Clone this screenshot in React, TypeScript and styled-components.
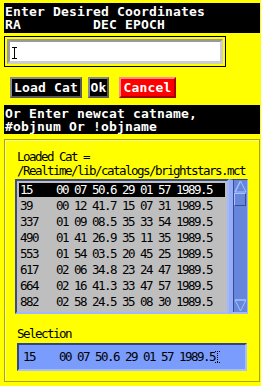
import React from "react";
import styled, { createGlobalStyle, css } from "styled-components";

const Global = createGlobalStyle`
  html, body { margin: 0; padding: 0; background: #ffff00; }
  #root { width: 261px; height: 386px; }
`;

const bigFont = css`
  font-family: "DejaVu Sans Mono", "Liberation Mono", monospace;
  font-weight: bold;
  font-size: 13px;
  letter-spacing: 0.17px;
  line-height: 13px;
  white-space: pre;
`;

const smallFont = css`
  font-family: "DejaVu Sans Mono", "Liberation Mono", monospace;
  font-size: 12.5px;
  letter-spacing: -1.525px;
  line-height: 14px;
  white-space: pre;
`;

const Window = styled.div`
  width: 261px;
  height: 386px;
  box-sizing: border-box;
  background: #ffff00;
  display: flex;
  flex-direction: column;
  align-items: flex-start;
  padding: 3px 0 0 4px;
  overflow: hidden;
`;

const Banner = styled.div<{ $mt: number; $pb: number }>`
  ${bigFont}
  margin-top: ${(p) => p.$mt}px;
  width: 256px;
  box-sizing: border-box;
  background: #000;
  color: #fff;
  padding: 2px 1px ${(p) => p.$pb}px;
`;

const InputFrame = styled.div`
  margin-top: 3px;
  width: 222px;
  height: 31px;
  box-sizing: border-box;
  border: 1px solid #000;
  padding: 2px;
`;

const TextField = styled.div`
  height: 25px;
  box-sizing: border-box;
  background: #fff;
  border-style: solid;
  border-width: 3px;
  border-color: #9a9a9a #cdcdcd #cdcdcd #9a9a9a;
  display: flex;
  align-items: center;
  padding: 2px 0 0 2px;
`;

const ButtonRow = styled.div`
  margin: 10px 0 0 6px;
  display: flex;
  align-items: flex-start;
`;

const Button = styled.div<{ $w: number; $ml: number; $danger?: boolean }>`
  ${bigFont}
  width: ${(p) => p.$w}px;
  height: 21px;
  margin-left: ${(p) => p.$ml}px;
  box-sizing: border-box;
  border: 2px solid;
  border-color: ${(p) =>
    p.$danger ? "#ff8c8c #a40000 #a40000 #ff8c8c" : "#8a8a8a #5a5a5a #5a5a5a #8a8a8a"};
  background: ${(p) => (p.$danger ? "#ff0000" : "#000")};
  color: #fff;
  display: flex;
  align-items: center;
  justify-content: center;
`;

const Frame = styled.div`
  margin-top: 5px;
  width: 256px;
  height: 243px;
  box-sizing: border-box;
  border: 1px solid #a8a800;
  box-shadow: inset 1px 1px 0 #ffff9a;
  padding: 10px 0 0 10px;
  display: flex;
  flex-direction: column;
  align-items: flex-start;
`;

const Label = styled.div<{ $mt?: number }>`
  ${smallFont}
  color: #000;
  margin-top: ${(p) => p.$mt ?? 0}px;
  padding-left: 2px;
`;

const ListBox = styled.div`
  margin-top: 1px;
  display: flex;
  height: 135px;
`;

const List = styled.div`
  width: 214px;
  height: 135px;
  box-sizing: border-box;
  border: 2px solid;
  border-color: #3b4a8e #9fb8ff #9fb8ff #3b4a8e;
  background: #bebebe;
  padding: 1px 2px;
  overflow: hidden;
`;

const Row = styled.div`
  height: 16px;
  padding: 1px 0;
  box-sizing: border-box;
`;

const Item = styled.div<{ $selected?: boolean }>`
  ${smallFont}
  height: 14px;
  padding-left: 1px;
  background: ${(p) => (p.$selected ? "#000" : "transparent")};
  color: ${(p) => (p.$selected ? "#fff" : "#000")};
`;

const ScrollBar = styled.div`
  width: 19px;
  height: 135px;
  box-sizing: border-box;
  border-style: solid;
  border-width: 1px 1px 2px 4px;
  border-color: #3b4a8e #9fb8ff #9fb8ff #94aefc;
  background: #6686dc;
  display: flex;
  flex-direction: column;
  align-items: center;
  justify-content: space-between;
  box-shadow: inset 1px 0 0 #3b4a8e;
`;

const ScrollTop = styled.div`
  display: flex;
  flex-direction: column;
  align-items: center;
`;

const Thumb = styled.div`
  width: 12px;
  height: 13px;
  box-sizing: border-box;
  border: 1px solid;
  border-color: #a8c0ff #3b4a8e #3b4a8e #a8c0ff;
  background: #6686dc;
`;

const SelField = styled.div`
  margin: 2px 0 0 2px;
  width: 230px;
  height: 28px;
  box-sizing: border-box;
  border: 2px solid;
  border-color: #34448c #a8c0ff #a8c0ff #34448c;
  background: #7a9cfc;
  padding-left: 4px;
  display: flex;
  align-items: center;
`;

const SelText = styled.span`
  ${smallFont}
  color: #000;
`;

const rows = [
  "15    00 07 50.6 29 01 57 1989.5",
  "39    00 12 41.7 15 07 31 1989.5",
  "337   01 09 08.5 35 33 54 1989.5",
  "490   01 41 26.9 35 11 35 1989.5",
  "553   01 54 03.5 20 45 25 1989.5",
  "617   02 06 34.8 23 24 47 1989.5",
  "664   02 16 41.3 33 47 57 1989.5",
  "882   02 58 24.5 35 08 30 1989.5",
];

const IBeam = ({ dotted }: { dotted?: boolean }) => (
  <svg width="5" height="12" viewBox="0 0 5 12" style={{ display: "block" }}>
    <g stroke="#000" strokeWidth="1" strokeDasharray={dotted ? "1 1" : undefined} fill="none">
      <line x1="0" y1="0.5" x2="5" y2="0.5" />
      <line x1="2.5" y1="0" x2="2.5" y2="12" />
      <line x1="0" y1="11.5" x2="5" y2="11.5" />
    </g>
  </svg>
);

const Arrow = ({ up }: { up?: boolean }) => (
  <svg width="13" height="13" viewBox="0 0 13 13" style={{ display: "block" }}>
    {up ? (
      <g fill="#6686dc">
        <polygon points="6.5,1 12,12 1,12" />
        <polyline points="1,12 6.5,1" stroke="#a8c0ff" strokeWidth="1.5" fill="none" />
        <polyline points="6.5,1 12,12 1,12" stroke="#a8c0ff" strokeWidth="1" fill="none" />
      </g>
    ) : (
      <g fill="#6686dc">
        <polygon points="1,1 12,1 6.5,12" />
        <polyline points="1,1 12,1" stroke="#a8c0ff" strokeWidth="1.5" fill="none" />
        <polyline points="1,1 6.5,12 12,1" stroke="#a8c0ff" strokeWidth="1" fill="none" />
      </g>
    )}
  </svg>
);

export default function App() {
  return (
    <>
      <Global />
      <Window>
        <Banner $mt={0} $pb={2}>
          {"Enter Desired Coordinates\nRA         DEC EPOCH"}
        </Banner>
        <InputFrame>
          <TextField>
            <IBeam />
          </TextField>
        </InputFrame>
        <ButtonRow>
          <Button $w={72} $ml={0}>Load Cat</Button>
          <Button $w={21} $ml={6}>Ok</Button>
          <Button $w={57} $ml={10} $danger>Cancel</Button>
        </ButtonRow>
        <Banner $mt={7} $pb={1}>
          {"Or Enter newcat catname,\n#objnum Or !objname"}
        </Banner>
        <Frame>
          <Label>{"Loaded Cat =\n/Realtime/lib/catalogs/brightstars.mct"}</Label>
          <ListBox>
            <List>
              {rows.map((r, i) => (
                <Row key={r}>
                  <Item $selected={i === 0}>{r}</Item>
                </Row>
              ))}
            </List>
            <ScrollBar>
              <ScrollTop>
                <Arrow up />
                <Thumb />
              </ScrollTop>
              <Arrow />
            </ScrollBar>
          </ListBox>
          <Label $mt={13}>Selection</Label>
          <SelField>
            <SelText>{"15    00 07 50.6 29 01 57 1989.5"}</SelText>
            <IBeam dotted />
          </SelField>
        </Frame>
      </Window>
    </>
  );
}
